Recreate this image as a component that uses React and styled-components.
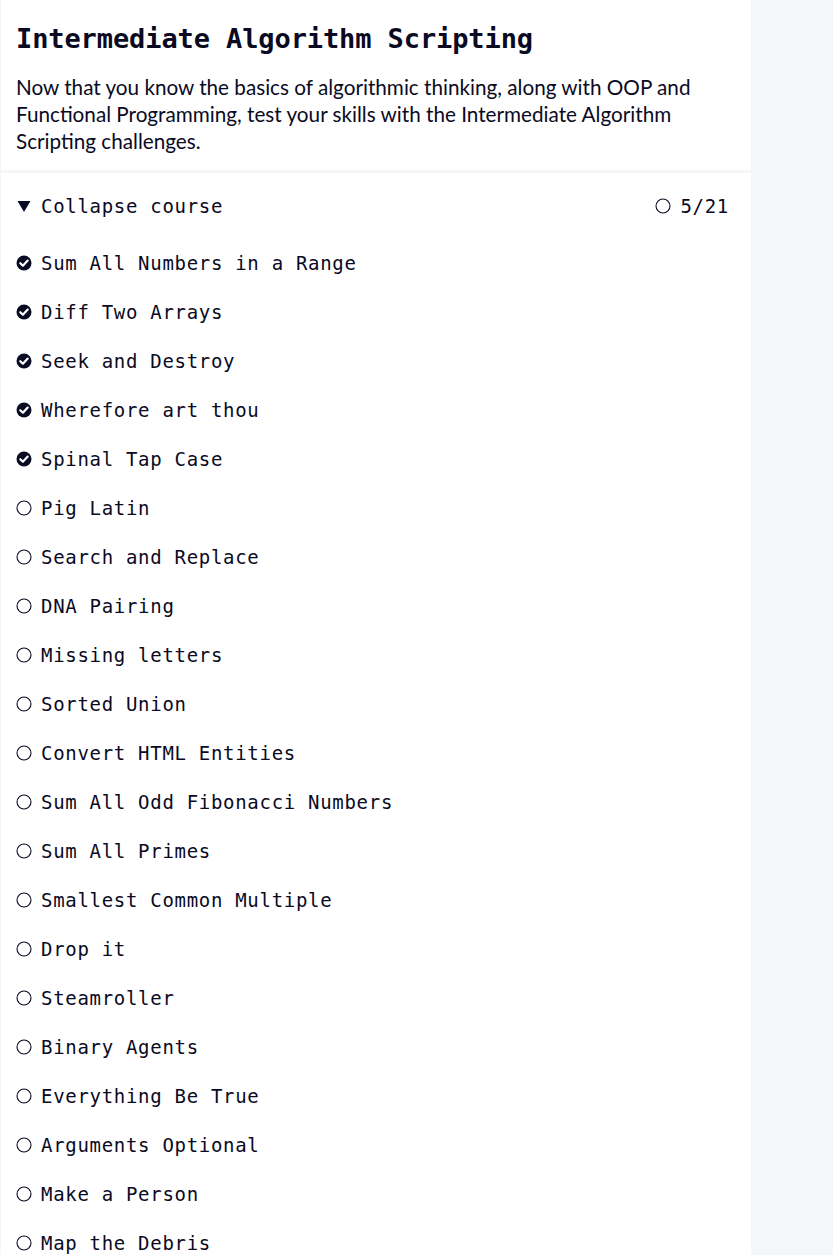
import React from "react";
import styled, { createGlobalStyle } from "styled-components";

const GlobalStyle = createGlobalStyle`
  html, body {
    margin: 0;
    padding: 0;
    background: #f5f6f7;
  }
  body {
    font-family: "Lato", "Noto Sans", sans-serif;
    color: #0a0a23;
  }
`;

const Page = styled.div`
  display: flex;
  padding-left: 1px;
  min-height: 1255px;
`;

const Panel = styled.main`
  width: 750px;
  background: #ffffff;
  display: flex;
  flex-direction: column;
`;

const Header = styled.header`
  padding: 16px 15px 15px 15px;
  border-bottom: 3px solid #f5f6f7;
`;

const Title = styled.h1`
  margin: 0 0 12px;
  font-family: "DejaVu Sans Mono", "Liberation Mono", monospace;
  font-weight: 700;
  font-size: 27px;
  line-height: 46px;
  letter-spacing: -0.1px;
`;

const Intro = styled.p`
  margin: 0;
  font-family: "Lato", sans-serif;
  font-size: 20.7px;
  line-height: 27px;
`;

const Mono = styled.span`
  font-family: "DejaVu Sans Mono", "Liberation Mono", monospace;
  font-size: 19px;
  letter-spacing: 0.7px;
  color: #0a0a23;
`;

const CollapseRow = styled.div`
  height: 65px;
  display: flex;
  align-items: center;
  justify-content: space-between;
  padding: 0 22px 0 15px;
`;

const Group = styled.div`
  display: flex;
  align-items: center;
  gap: ${(p) => p.$gap || 9}px;
`;

const List = styled.ul`
  list-style: none;
  margin: 0;
  padding: 0;
`;

const Item = styled.li`
  height: 49.05px;
  display: flex;
  align-items: center;
  gap: 9px;
  padding-left: 15px;
`;

const IconBox = styled.svg`
  width: 16px;
  height: 16px;
  flex: none;
  display: block;
`;

const Triangle = () => (
  <IconBox viewBox="0 0 16 16">
    <polygon points="1.5,3 14.5,3 8,14" fill="#0a0a23" />
  </IconBox>
);

const Done = () => (
  <IconBox viewBox="0 0 16 16">
    <circle cx="8" cy="8" r="7.5" fill="#0a0a23" />
    <polyline
      points="4.3,8.2 6.9,10.7 11.7,5.6"
      fill="none"
      stroke="#ffffff"
      strokeWidth="2.2"
      strokeLinecap="round"
      strokeLinejoin="round"
    />
  </IconBox>
);

const Todo = () => (
  <IconBox viewBox="0 0 16 16">
    <circle cx="8" cy="8" r="7" fill="none" stroke="#0a0a23" strokeWidth="1.1" />
  </IconBox>
);

const challenges = [
  ["Sum All Numbers in a Range", true],
  ["Diff Two Arrays", true],
  ["Seek and Destroy", true],
  ["Wherefore art thou", true],
  ["Spinal Tap Case", true],
  ["Pig Latin", false],
  ["Search and Replace", false],
  ["DNA Pairing", false],
  ["Missing letters", false],
  ["Sorted Union", false],
  ["Convert HTML Entities", false],
  ["Sum All Odd Fibonacci Numbers", false],
  ["Sum All Primes", false],
  ["Smallest Common Multiple", false],
  ["Drop it", false],
  ["Steamroller", false],
  ["Binary Agents", false],
  ["Everything Be True", false],
  ["Arguments Optional", false],
  ["Make a Person", false],
  ["Map the Debris", false],
];

export default function App() {
  return (
    <>
      <GlobalStyle />
      <Page>
        <Panel>
          <Header>
            <Title>Intermediate Algorithm Scripting</Title>
            <Intro>
              Now that you know the basics of algorithmic thinking, along with OOP and
              Functional Programming, test your skills with the Intermediate Algorithm
              Scripting challenges.
            </Intro>
          </Header>
          <CollapseRow>
            <Group $gap={9}>
              <Triangle />
              <Mono>Collapse course</Mono>
            </Group>
            <Group $gap={9}>
              <Todo />
              <Mono>5/21</Mono>
            </Group>
          </CollapseRow>
          <List>
            {challenges.map(([name, done]) => (
              <Item key={name}>
                {done ? <Done /> : <Todo />}
                <Mono>{name}</Mono>
              </Item>
            ))}
          </List>
        </Panel>
      </Page>
    </>
  );
}
